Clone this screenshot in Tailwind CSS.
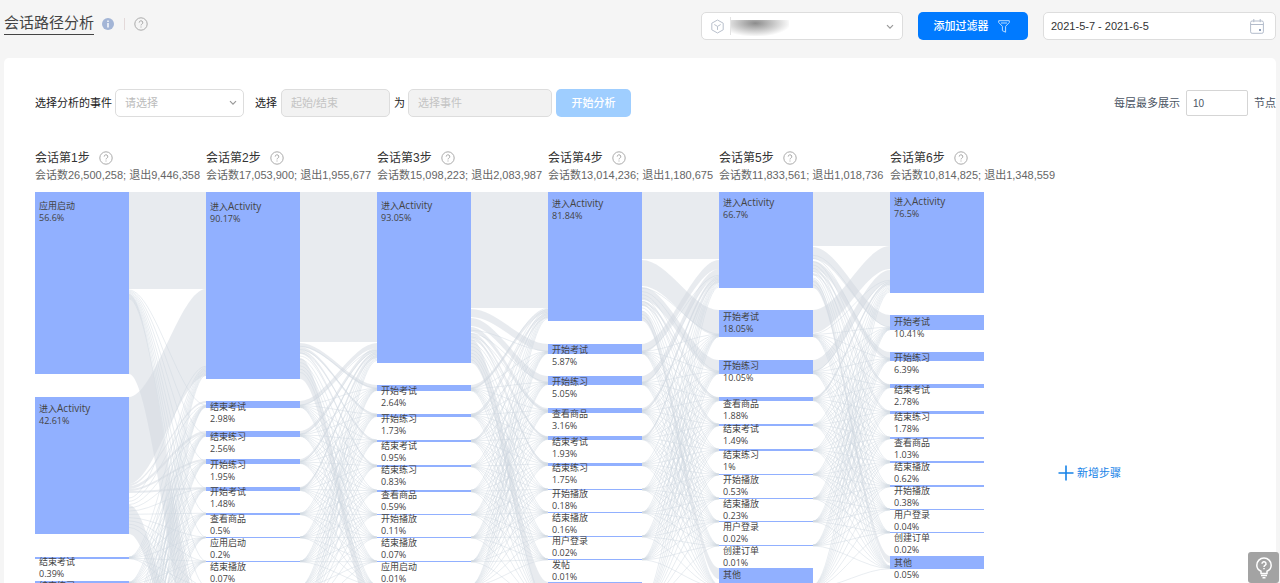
<!DOCTYPE html>
<html lang="zh-CN">
<head>
<meta charset="utf-8">
<meta name="viewport" content="width=device-width, initial-scale=1">
<title>会话路径分析</title>
<script src="https://cdn.jsdelivr.net/npm/@tailwindcss/browser@4"></script>
</head>
<body class="flex h-screen flex-col overflow-hidden bg-[#f5f5f5] font-['Liberation_Sans','Noto_Sans_CJK_SC',sans-serif] text-[11px] text-[#333]">

<svg class="hidden">
  <symbol id="help" viewBox="0 0 14 14"><circle cx="7" cy="7" r="6.2" fill="none" stroke="currentColor"/><path d="M5.2 5.6a1.8 1.8 0 1 1 2.6 1.6c-.6.3-.8.6-.8 1.2M7 9.5v1" fill="none" stroke="currentColor"/></symbol>
  <symbol id="chevron" viewBox="0 0 8 6"><path d="M1 1.2l3 3 3-3" fill="none" stroke="currentColor" stroke-width="1.2"/></symbol>
</svg>

<header class="flex h-[58px] shrink-0 items-start justify-between pt-3 pr-1 pl-1">
  <div class="flex items-center">
    <h1 class="border-b border-[#444] text-[15px] leading-[22px] text-[#444]">会话路径分析</h1>
    <svg class="ml-2 h-3 w-3" viewBox="0 0 12 12"><circle cx="6" cy="6" r="6" fill="#a3b5d6"/><path d="M6 2.6v1.3M6 5v4.400" stroke="#fff" stroke-width="1.4"/></svg>
    <span class="ml-[10px] h-3 w-px bg-[#e3d9d9]"></span>
    <button type="button" aria-label="帮助" class="ml-[9px] text-[#aaa]"><svg class="h-[14px] w-[14px]"><use href="#help"/></svg></button>
  </div>
  <div class="flex items-center">
    <div class="relative flex h-7 w-[202px] items-center rounded-[5px] border border-[#ddd] bg-white pl-2">
      <svg class="h-[15px] w-[15px] shrink-0" viewBox="0 0 15 15" fill="none" stroke="#b9c0cc"><path d="M7.500 1l5.700 3.200v6.600l-5.700 3.200-5.700-3.200V4.200z" stroke-linejoin="round"/><path d="M4.300 5.500l3.200 1.900 3.200-1.900M7.500 7.400v3.500"/></svg>
      <span class="ml-[5px] h-[18px] w-px bg-[#e4e4e4]"></span>
      <span class="mt-1 h-4 w-[58px] bg-radial-[at_42%_20%] from-[#8c8c8c] to-white to-75%"></span>
      <select aria-label="应用" class="absolute inset-0 h-full w-full appearance-none bg-transparent"><option></option></select>
      <svg class="pointer-events-none absolute top-[11px] right-2 h-[6px] w-2 text-[#999]"><use href="#chevron"/></svg>
    </div>
    <button type="button" class="ml-[15px] flex h-7 w-[110px] items-center justify-center gap-[9px] rounded-[5px] bg-[#007aff] pr-[3px] font-medium text-white">添加过滤器
      <svg class="h-[13px] w-[12px]" viewBox="0 0 12 13" fill="none" stroke="#b9dcff" stroke-linejoin="round"><path d="M.7.7h10.600v1.800L7.600 6.300v5.900l-3.200-1.500V6.300L.7 2.500zM3 3h6"/></svg>
    </button>
    <div class="ml-[15px] flex h-7 w-[233px] items-center rounded-[5px] border border-[#ddd] bg-white pr-[11px] pl-[7px]">
      <input aria-label="日期范围" value="2021-5-7 - 2021-6-5" class="min-w-0 flex-1 text-[11px] outline-none">
      <svg class="h-[15px] w-[14px]" viewBox="0 0 14 15" fill="none" stroke="#b3bccb"><rect x=".6" y="2" width="12.800" height="12.300" rx="1.500"/><path d="M.6 5.500h12.800M3.800 0v3.200M10.200 0v3.200"/><rect x="9" y="10" width="2" height="2" fill="#8fa0bb" stroke="none"/></svg>
    </div>
  </div>
</header>

<main class="mx-1 min-h-0 flex-1 overflow-hidden rounded-t-[5px] bg-white pt-[31px]">
  <div class="flex items-center justify-between pl-[31px]">
    <form class="flex items-center text-[#222]">
      <label for="event">选择分析的事件</label>
      <div class="relative ml-[3px]">
        <select id="event" class="h-7 w-[129px] appearance-none rounded-[5px] border border-[#ddd] bg-white pl-[9px] text-[11px] text-[#bbb] outline-none"><option>请选择</option></select>
        <svg class="pointer-events-none absolute top-[11px] right-[7px] h-[6px] w-2 text-[#999]"><use href="#chevron"/></svg>
      </div>
      <label for="edge" class="ml-[11px]">选择</label>
      <input id="edge" disabled placeholder="起始/结束" class="ml-1 h-7 w-[109px] rounded-[5px] border border-[#ddd] bg-[#f2f2f2] pl-[9px] placeholder:text-[#c4c4c4]">
      <label for="target" class="ml-1">为</label>
      <input id="target" disabled placeholder="选择事件" class="ml-[3px] h-7 w-[144px] rounded-[5px] border border-[#ddd] bg-[#f2f2f2] pl-[9px] placeholder:text-[#c4c4c4]">
      <button type="button" disabled class="ml-1 h-7 w-[75px] rounded-[5px] bg-[#9fceff] font-medium text-white">开始分析</button>
    </form>
    <div class="flex items-center text-[#4b5563]">
      <label for="limit">每层最多展示</label>
      <input id="limit" value="10" class="mx-[6px] h-[26px] w-[62px] rounded-[2px] border border-[#d5d5d5] pl-[6px] text-[10px] outline-none">
      <span>节点</span>
    </div>
  </div>

  <div id="steps" class="mt-8 flex pl-[31px]"></div>

  <div class="mt-2 flex items-center pl-[31px]">
    <svg id="chart" role="img" aria-label="会话路径桑基图" class="h-[562px] w-[950px] shrink-0 overflow-hidden font-['Open_Sans','Noto_Sans_CJK_SC',sans-serif]"></svg>
    <button type="button" class="ml-[73px] flex items-center gap-[3px] text-[#1683e8]">
      <svg class="h-[16px] w-[16px]" viewBox="0 0 16 16"><path d="M8 .5v15M.5 8h15" stroke="currentColor" stroke-width="1.600"/></svg>新增步骤
    </button>
  </div>
</main>

<button type="button" aria-label="帮助中心" class="fixed right-px bottom-0 flex h-[31px] w-[31px] items-center justify-center rounded-[3px] bg-[#a3a3a3]">
  <svg class="h-[22px] w-[18px]" viewBox="0 0 18 22" fill="none" stroke="#fff" stroke-width="1.500"><path d="M6 16.500v-2.300C3.300 13 1.800 11 1.800 8.200a7.200 7.200 0 0 1 14.400 0c0 2.800-1.500 4.800-4.200 6v2.300zM6 18.500h6M7.500 20.800h3"/><path d="M7 6.700a2 2 0 1 1 3 1.700c-.7.4-1 .7-1 1.500M9 11v1.300"/></svg>
</button>

<template id="step">
  <section class="w-[171px] shrink-0 whitespace-nowrap">
    <h2 class="flex items-center gap-[9px] text-[12px] leading-[18px] text-[#333]"><span></span><svg class="h-[14px] w-[14px] text-[#aaa]"><use href="#help"/></svg></h2>
    <p class="text-[11px] leading-[17px] text-[#666]"></p>
  </section>
</template>

<script>
const totals = [['26,500,258','9,446,358'],['17,053,900','1,955,677'],['15,098,223','2,083,987'],['13,014,236','1,180,675'],['11,833,561','1,018,736'],['10,814,825','1,348,559']];
totals.forEach(([n, out], i) => {
  const s = document.getElementById('step').content.cloneNode(true);
  s.querySelector('span').textContent = `会话第${i + 1}步`;
  s.querySelector('p').textContent = `会话数${n}; 退出${out}`;
  document.getElementById('steps').append(s);
});

// Nodes of each step: [top, bottom, name, share, label centre]
const steps = [
  [[0,182,'应用启动','56.6%',14],[205,342,'进入Activity','42.61%',217],[365,367,'结束考试','0.39%',370],[389,393,'结束练习','0.3%',394],[416,417],[440,441],[464,465],[488,489],[512,513]],
  [[0,187,'进入Activity','90.17%',15],[209,216,'结束考试','2.98%',215],[239,245,'结束练习','2.56%',245],[267,272,'开始练习','1.95%',273],[295,299,'开始考试','1.48%',300],[321,323,'查看商品','0.5%',327],[345,346,'应用启动','0.2%',351],[369,370,'结束播放','0.07%',375],[394,395],[418,419]],
  [[0,171,'进入Activity','93.05%',14],[193,199,'开始考试','2.64%',199],[222,225,'开始练习','1.73%',227],[248,250,'结束考试','0.95%',254],[273,275,'结束练习','0.83%',278],[298,300,'查看商品','0.59%',303],[322,323,'开始播放','0.11%',327],[345,346,'结束播放','0.07%',351],[369,370,'应用启动','0.01%',375],[393,394]],
  [[0,129,'进入Activity','81.84%',12],[152,162,'开始考试','5.87%',158],[184,193,'开始练习','5.05%',190],[216,221,'查看商品','3.16%',222],[244,248,'结束考试','1.93%',250],[271,274,'结束练习','1.75%',276],[297,298,'开始播放','0.18%',302],[320,321,'结束播放','0.16%',326],[344,345,'用户登录','0.02%',349],[367,368,'发帖','0.01%',373],[390,413]],
  [[0,96,'进入Activity','66.7%',11],[118,145,'开始考试','18.05%',125],[168,182,'开始练习','10.05%',174],[205,209,'查看商品','1.88%',212],[232,234,'结束考试','1.49%',237],[257,259,'结束练习','1%',263],[282,283,'开始播放','0.53%',288],[306,307,'结束播放','0.23%',312],[329,330,'用户登录','0.02%',335],[353,354,'创建订单','0.01%',359],[376,396,'其他','',383]],
  [[0,101,'进入Activity','76.5%',10],[123,138,'开始考试','10.41%',130],[160,169,'开始练习','6.39%',166],[192,196,'结束考试','2.78%',198],[219,222,'结束练习','1.78%',225],[245,247,'查看商品','1.03%',251],[269,271,'结束播放','0.62%',275],[293,295,'开始播放','0.38%',299],[317,318,'用户登录','0.04%',323],[340,341,'创建订单','0.02%',346],[364,377,'其他','0.05%',371]]
];
// Main flows out of each step: [source top, source bottom, target top, target bottom]
const flows = [
  [[0,97,0,97],[102,182,428,508],[205,292,97,184],[292,294,209,211],[294,297,239,242],[297,299,267,269],[299,301,295,297],[313,342,527,556]],
  [[0,150,0,150],[151,155,193,197],[155,158,222,224],[158,160,248,250],[160,162,273,275],[209,214,151,156],[239,243,156,160],[267,270,160,163],[295,298,163,166],[166,187,406,427]],
  [[0,116,0,116],[117,125,152,160],[126,134,184,192],[135,140,216,220],[141,144,244,247],[144,147,271,274],[193,197,117,121],[222,225,121,124],[248,250,124,126],[147,171,390,413]],
  [[0,67,0,67],[68,94,118,144],[95,108,168,181],[109,112,205,208],[112,114,232,234],[152,161,68,77],[184,192,77,84],[216,220,84,88],[244,247,88,91],[119,129,376,387]],
  [[0,54,0,54],[55,67,123,135],[69,77,160,168],[77,80,192,195],[81,83,219,221],[118,141,54,77],[168,180,78,90],[205,208,90,93],[87,96,364,371]]
];
const NS = 'http://www.w3.org/2000/svg', chart = document.getElementById('chart');
const add = (tag, attrs, text) => {
  const el = document.createElementNS(NS, tag);
  for (const k in attrs) el.setAttribute(k, attrs[k]);
  if (text) el.textContent = text;
  chart.append(el);
  return el;
};
const PITCH = 171, BAR = 94;
flows.forEach((list, s) => {
  const x0 = s * PITCH + BAR, x1 = (s + 1) * PITCH, third = (x1 - x0) / 3, p = x0 + third, q = x1 - third;
  list.forEach(([a, b, c, d]) => add('path', {d: `M${x0} ${a}C${p} ${a} ${q} ${c} ${x1} ${c}V${d}C${q} ${d} ${p} ${b} ${x0} ${b}Z`, fill: '#d2d8e1', 'fill-opacity': .52}));
  // Minor transitions between every pair of nodes
  steps[s].forEach((n, i) => steps[s + 1].forEach((t, j) => {
    if (i === 0 && j === 0) return;
    const start = s === 0 && i === 0 ? 97 : Math.max(n[0], n[1] - (i < 2 && n[1] - n[0] > 60 ? 36 : 3)), end = Math.max(t[0], t[1] - (j === 0 ? 14 : 3));
    const span = s === 0 && i === 0 ? 12 : n[1] - start;
    const y0 = start + span * j / 11, y1 = end + (t[1] - end) * i / 11;
    add('path', {d: `M${x0} ${y0}C${p} ${y0} ${q} ${y1} ${x1} ${y1}`, fill: 'none', stroke: '#cfd6df', 'stroke-opacity': .45});
  }));
});
steps.forEach((nodes, s) => nodes.forEach(([a, b, name, share, c]) => {
  const x = s * PITCH;
  add('rect', {x, y: a, width: BAR, height: b - a, fill: '#91b0ff'});
  if (!name) return;
  const label = add('text', {x: x + 4, y: c + 3, 'font-size': 9, fill: '#444'});
  label.textContent = name.replace('Activity', '');
  if (name.includes('Activity')) {
    const latin = document.createElementNS(NS, 'tspan');
    latin.setAttribute('font-size', 10);
    latin.textContent = 'Activity';
    label.append(latin);
  }
  if (share) add('text', {x: x + 4, y: c + 15, 'font-size': 9, fill: '#444'}, share);
}));
</script>
</body>
</html>
